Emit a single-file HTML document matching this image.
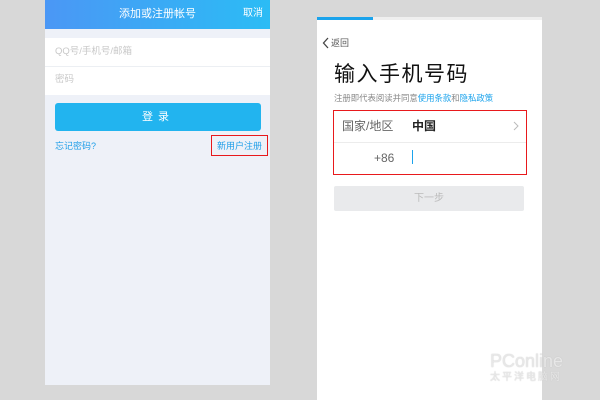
<!DOCTYPE html>
<html><head><meta charset="utf-8"><style>
*{margin:0;padding:0;box-sizing:border-box}
body{width:600px;height:400px;background:#d8d8d8;position:relative;overflow:hidden;font-family:"Liberation Sans","Noto Sans CJK SC",sans-serif}
.a{position:absolute}
</style></head><body>
<div class="a" style="left:45px;top:0;width:225px;height:385px;background:#eef1f8"></div>
<div class="a" style="left:45px;top:0;width:225px;height:29px;background:linear-gradient(90deg,#4b97f5,#2bbcf5)"></div>
<div class="a" style="left:45px;top:7px;width:225px;text-align:center;color:#fff;font-size:11px;line-height:14px">添加或注册帐号</div>
<div class="a" style="left:243px;top:7px;color:#fff;font-size:10px;line-height:14px">取消</div>
<div class="a" style="left:45px;top:38px;width:225px;height:57px;background:#fff"></div>
<div class="a" style="left:45px;top:66px;width:225px;height:1px;background:#eceff3"></div>
<div class="a" style="left:55px;top:46px;color:#c8c8c8;font-size:9.5px;line-height:12px">QQ号/手机号/邮箱</div>
<div class="a" style="left:55px;top:74px;color:#c8c8c8;font-size:9.5px;line-height:12px">密码</div>
<div class="a" style="left:55px;top:103px;width:206px;height:28px;border-radius:3px;background:#22b4ef"></div>
<div class="a" style="left:55px;top:110px;width:206px;text-align:center;color:#fff;font-size:11px;line-height:14px;letter-spacing:5px">登录</div>
<div class="a" style="left:55px;top:140px;color:#1e9ee8;font-size:9px;line-height:12px">忘记密码?</div>
<div class="a" style="left:211px;top:135px;width:57px;height:21px;border:1px solid #e8191c"></div>
<div class="a" style="left:217px;top:140px;color:#1e9ee8;font-size:9px;line-height:12px">新用户注册</div>

<div class="a" style="left:317px;top:17px;width:225px;height:383px;background:#fff"></div>
<div class="a" style="left:317px;top:17px;width:225px;height:3px;background:#efefef"></div>
<div class="a" style="left:317px;top:17px;width:56px;height:3px;background:#1ba3ec"></div>
<svg class="a" style="left:322px;top:37px" width="8" height="12"><path d="M6 1L1.5 6L6 11" stroke="#444" stroke-width="1.3" fill="none"/></svg>
<div class="a" style="left:331px;top:37px;color:#555;font-size:9px;line-height:12px">返回</div>
<div class="a" style="left:334px;top:62px;color:#111;font-size:21px;line-height:26px;letter-spacing:1.5px">输入手机号码</div>
<div class="a" style="left:334px;top:93px;color:#888;font-size:8.4px;line-height:10px">注册即代表阅读并同意<span style="color:#1ba3ec">使用条款</span>和<span style="color:#1ba3ec">隐私政策</span></div>
<div class="a" style="left:333px;top:110px;width:194px;height:65px;border:1px solid #e8191c"></div>
<div class="a" style="left:334px;top:142px;width:192px;height:1px;background:#ececec"></div>
<div class="a" style="left:342px;top:119px;color:#666;font-size:12px;line-height:14px">国家/地区</div>
<div class="a" style="left:412px;top:119px;color:#222;font-size:12px;line-height:14px;font-weight:bold">中国</div>
<svg class="a" style="left:513px;top:121px" width="6" height="10"><path d="M1 1L5 5L1 9" stroke="#bbb" stroke-width="1" fill="none"/></svg>
<div class="a" style="left:374px;top:151px;color:#666;font-size:12px;line-height:14px">+86</div>
<div class="a" style="left:412px;top:150px;width:1px;height:14px;background:#1ba3ec"></div>
<div class="a" style="left:334px;top:186px;width:190px;height:25px;background:#e9eaec;border-radius:2px"></div>
<div class="a" style="left:334px;top:192px;width:190px;text-align:center;color:#bbb;font-size:10px;line-height:13px">下一步</div>
<div class="a" style="left:490px;top:352px;color:rgba(235,235,235,0.9);font-size:18px;line-height:18px;text-shadow:0 0 1px #bbb">PConline</div>
<div class="a" style="left:490px;top:372px;color:rgba(235,235,235,0.9);font-size:10px;line-height:12px;letter-spacing:2px;text-shadow:0 0 1px #bbb">太平洋电脑网</div>
</body></html>
